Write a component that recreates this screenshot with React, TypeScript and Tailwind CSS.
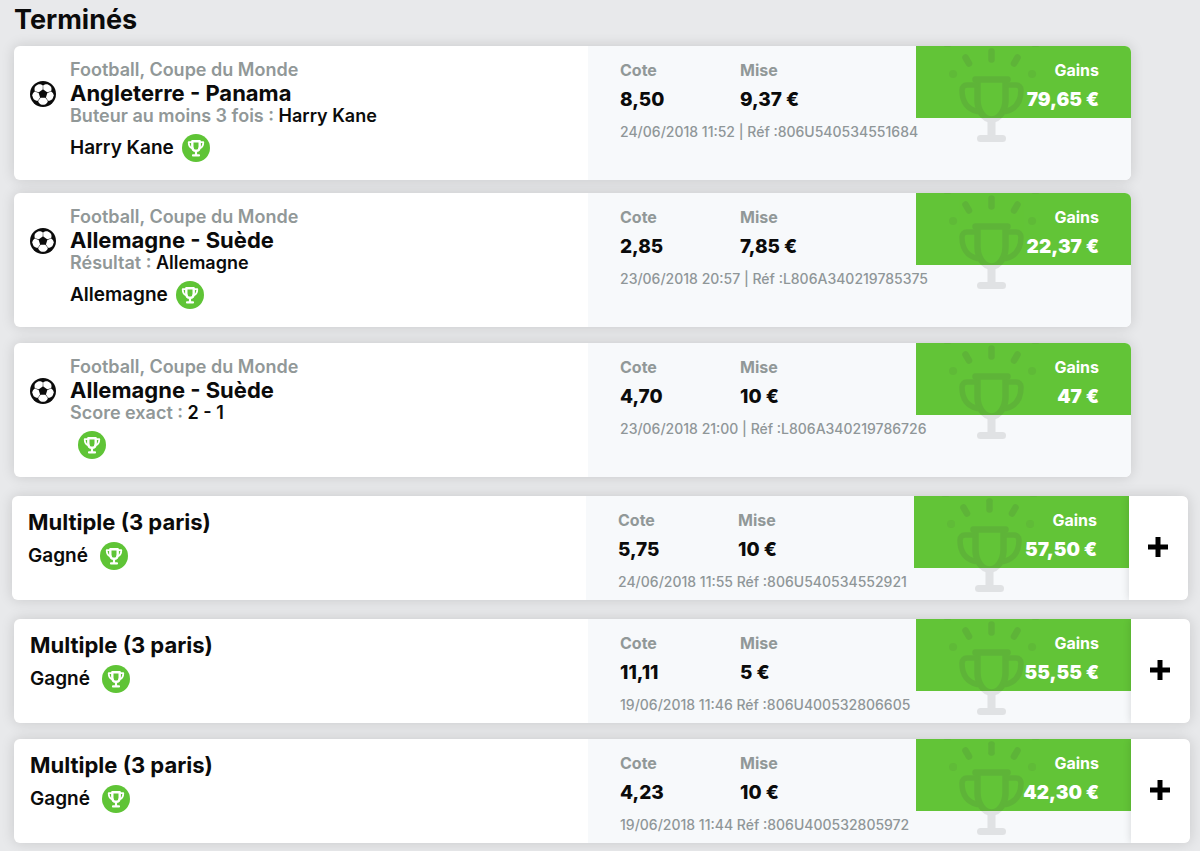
import React from 'react';

interface Bet {
  id: number;
  competition?: string;
  title: string;
  market?: string;
  pick?: string;
  result: string;
  odds: string;
  stake: string;
  gains: string;
  reference: string;
  spacing: string;
}

const singles: Bet[] = [
  {
    id: 1,
    competition: 'Football, Coupe du Monde',
    title: 'Angleterre - Panama',
    market: 'Buteur au moins 3 fois :',
    pick: 'Harry Kane',
    result: 'Harry Kane',
    odds: '8,50',
    stake: '9,37 €',
    gains: '79,65 €',
    reference: '24/06/2018 11:52 | Réf :806U540534551684',
    spacing: 'ml-3.5 mr-[69px]',
  },
  {
    id: 2,
    competition: 'Football, Coupe du Monde',
    title: 'Allemagne - Suède',
    market: 'Résultat :',
    pick: 'Allemagne',
    result: 'Allemagne',
    odds: '2,85',
    stake: '7,85 €',
    gains: '22,37 €',
    reference: '23/06/2018 20:57 | Réf :L806A340219785375',
    spacing: 'ml-3.5 mr-[69px] mt-[13px]',
  },
  {
    id: 3,
    competition: 'Football, Coupe du Monde',
    title: 'Allemagne - Suède',
    market: 'Score exact :',
    pick: '2 - 1',
    result: '',
    odds: '4,70',
    stake: '10 €',
    gains: '47 €',
    reference: '23/06/2018 21:00 | Réf :L806A340219786726',
    spacing: 'ml-3.5 mr-[69px] mt-4',
  },
];

const multiples: Bet[] = [
  {
    id: 4,
    title: 'Multiple (3 paris)',
    result: 'Gagné',
    odds: '5,75',
    stake: '10 €',
    gains: '57,50 €',
    reference: '24/06/2018 11:55 Réf :806U540534552921',
    spacing: 'mx-3 mt-[19px]',
  },
  {
    id: 5,
    title: 'Multiple (3 paris)',
    result: 'Gagné',
    odds: '11,11',
    stake: '5 €',
    gains: '55,55 €',
    reference: '19/06/2018 11:46 Réf :806U400532806605',
    spacing: 'ml-3.5 mr-2.5 mt-[19px]',
  },
  {
    id: 6,
    title: 'Multiple (3 paris)',
    result: 'Gagné',
    odds: '4,23',
    stake: '10 €',
    gains: '42,30 €',
    reference: '19/06/2018 11:44 Réf :806U400532805972',
    spacing: 'ml-3.5 mr-2.5 mt-4',
  },
];

const BallIcon: React.FC = () => (
  <svg viewBox="0 0 26 26" className="size-[26px] shrink-0" aria-hidden="true">
    <circle cx="13" cy="13" r="13" fill="#0b0b0b" />
    {[0, 72, 144, 216, 288].map(angle => (
      <path
        key={angle}
        d="M10.6 16.8h4.800l2.500 3.200c-.3 1.500-1.400 2.800-2.700 3.500a10 10 0 0 1-4.400 0c-1.300-.7-2.400-2-2.700-3.500z"
        fill="#fff"
        transform={`rotate(${angle} 13 13)`}
      />
    ))}
  </svg>
);

const WonBadge: React.FC = () => (
  <svg viewBox="0 0 28 28" className="size-7 shrink-0" aria-hidden="true">
    <circle cx="14" cy="14" r="14" fill="#5fc436" />
    <g fill="none" stroke="#fff" strokeWidth="2.400" strokeLinecap="round" strokeLinejoin="round">
      <path d="M10.300 7.200h7.400v5.200c0 2.700-1.600 4.400-3.700 4.400s-3.700-1.700-3.700-4.400z" />
      <path d="M10 8.200H6.700c0 3.500 1.300 5.600 4.200 6.200M18 8.200h3.300c0 3.500-1.300 5.600-4.200 6.200" strokeWidth="1.800" />
      <path d="M14 17v4M11 21.400h6" strokeWidth="2.200" />
    </g>
  </svg>
);

const TrophyWatermark: React.FC = () => (
  <svg
    viewBox="28 0 96 100"
    className="pointer-events-none absolute top-0 left-7 h-[100px] w-24"
    aria-hidden="true"
  >
    <g fill="none" stroke="#444" opacity="0.12" strokeLinecap="round" strokeLinejoin="round">
      <path d="M59.500 33.500h32M61.500 33.500V54c0 10 6 19.500 14 19.500s14-9.500 14-19.500V33.500" strokeWidth="6.500" />
      <path d="M60 39h-9c-3 0-5 2-5 5 0 11 5 19 15.500 21.500M91 39h9c3 0 5 2 5 5 0 11-5 19-15.500 21.500" strokeWidth="5.500" />
      <path d="M75.500 76v15" strokeWidth="8" strokeLinecap="butt" />
      <path d="M64.500 92.500h22" strokeWidth="7" />
      <path d="M75.500 5.500v8M49.500 11.500l3.500 6M101.500 11.500l-3.500 6" strokeWidth="6.500" />
    </g>
    <g fill="none" stroke="#444" opacity="0.07" strokeLinecap="round">
      <path d="M37 28h.1M116 28h.1" strokeWidth="8" />
      <path d="M29 0h5M117 0h5" strokeWidth="2" />
    </g>
  </svg>
);

const Stat: React.FC<{ label: string; value: string; className: string }> = ({ label, value, className }) => (
  <div className={className}>
    <dt className="text-base leading-6 font-bold text-[#919898]">{label}</dt>
    <dd className="mt-1.5 text-[19px] leading-6 font-extrabold">{value}</dd>
  </div>
);

const BetSummary: React.FC<{ bet: Bet }> = ({ bet }) => (
  <div className="w-[543px] shrink-0 bg-[#f7f9fb]">
    <dl className="flex h-[72px]">
      <Stat label="Cote" value={bet.odds} className="ml-8 w-[120px] pt-3" />
      <Stat label="Mise" value={bet.stake} className="flex-1 pt-3" />
      <div className="relative w-[215px] bg-[#62c437] pt-3 pr-8 text-right text-white">
        <TrophyWatermark />
        <dt className="relative text-base leading-6 font-bold">Gains</dt>
        <dd className="relative mt-1.5 text-[19px] leading-6 font-black">{bet.gains}</dd>
      </div>
    </dl>
    <p className="mt-1 ml-8 text-sm leading-5 font-medium text-[#8f9698]">{bet.reference}</p>
  </div>
);

const SingleBet: React.FC<{ bet: Bet }> = ({ bet }) => (
  <article className={`flex min-h-[134px] overflow-hidden rounded-md bg-white shadow-[0_0_14px_rgba(0,0,0,0.14)] ${bet.spacing}`}>
    <div className="flex flex-1 gap-3.5 pt-3 pl-4">
      <div className="pt-[23px]">
        <BallIcon />
      </div>
      <div>
        <p className="text-lg leading-6 font-semibold text-[#919898]">{bet.competition}</p>
        <h2 className="text-[22px] leading-[22px] font-bold">{bet.title}</h2>
        <p className="text-lg leading-6 font-semibold text-[#919898]">
          {bet.market} <span className="text-[#0b0b0b]">{bet.pick}</span>
        </p>
        <div className="mt-1.5 flex items-center gap-2">
          <span className="text-[19px] leading-6 font-semibold">{bet.result}</span>
          <WonBadge />
        </div>
      </div>
    </div>
    <BetSummary bet={bet} />
  </article>
);

const MultipleBet: React.FC<{ bet: Bet }> = ({ bet }) => (
  <article className={`flex min-h-[104px] overflow-hidden rounded-md bg-white shadow-[0_0_14px_rgba(0,0,0,0.14)] ${bet.spacing}`}>
    <div className="flex-1 pt-3.5 pl-4">
      <h2 className="text-[22px] leading-6 font-bold">{bet.title}</h2>
      <div className="mt-2 flex items-center gap-3">
        <span className="text-[19px] leading-6 font-semibold">{bet.result}</span>
        <WonBadge />
      </div>
    </div>
    <BetSummary bet={bet} />
    <button
      type="button"
      aria-label="Afficher les paris"
      className="relative flex w-[59px] shrink-0 items-center justify-center bg-white pr-0.5 pb-0.5 shadow-[0_0_8px_rgba(0,0,0,0.14)]"
    >
      <svg viewBox="0 0 20 20" className="size-5" aria-hidden="true">
        <path d="M10 0v20M0 10h20" stroke="#000" strokeWidth="5" />
      </svg>
    </button>
  </article>
);

const App: React.FC = () => {
  return (
    <main className="min-h-screen bg-[#e8e9eb] pt-1 pb-2 font-['Inter','Liberation_Sans',sans-serif] text-[#0b0b0b]">
      <h1 className="mb-2.5 ml-3.5 text-[27px] leading-8 font-bold">Terminés</h1>
      <section>
        {singles.map(bet => (
          <SingleBet key={bet.id} bet={bet} />
        ))}
      </section>
      <section>
        {multiples.map(bet => (
          <MultipleBet key={bet.id} bet={bet} />
        ))}
      </section>
    </main>
  );
};

export default App;
